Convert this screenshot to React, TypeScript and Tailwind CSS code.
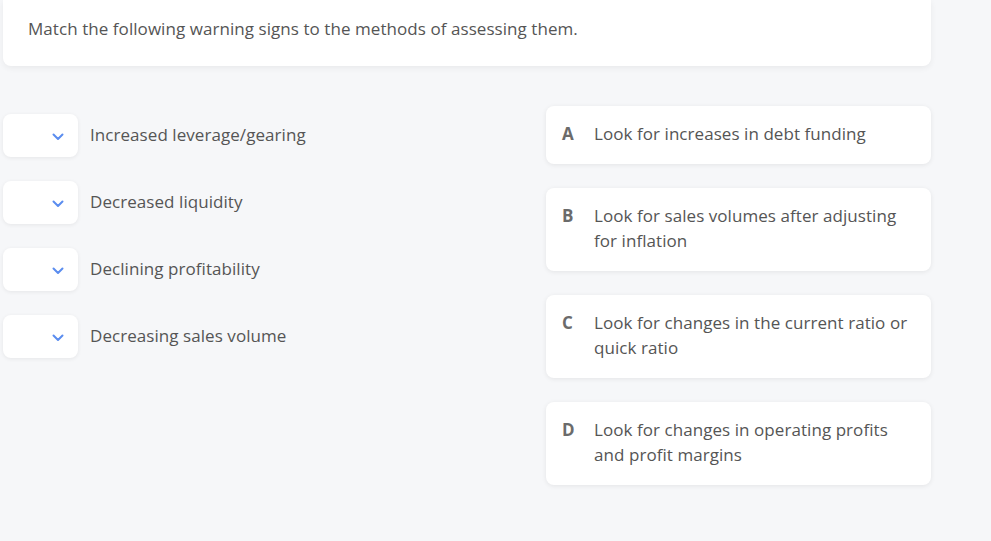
import React from "react";

const left = [
  "Increased leverage/gearing",
  "Decreased liquidity",
  "Declining profitability",
  "Decreasing sales volume",
];

const right: [string, string][] = [
  ["A", "Look for increases in debt funding"],
  ["B", "Look for sales volumes after adjusting for inflation"],
  ["C", "Look for changes in the current ratio or quick ratio"],
  ["D", "Look for changes in operating profits and profit margins"],
];

function Chevron() {
  return (
    <svg width="12" height="8" viewBox="0 0 12 8" fill="none">
      <path d="M1.5 1.5 L6 6 L10.5 1.5" stroke="#5b8def" strokeWidth="2" strokeLinecap="round" strokeLinejoin="round" />
    </svg>
  );
}

export default function App() {
  return (
    <div className="min-h-[541px] w-[991px] bg-[#f6f7f9] text-[17px] tracking-[0.06px] text-[#555555]" style={{ fontFamily: '"Open Sans", sans-serif' }}>
      <div className="ml-[3px] w-[928px] rounded-b-lg bg-white pl-[25px] pt-[16px] pb-[24px] shadow-[0_2px_6px_rgba(0,0,0,0.06)]">
        <p className="leading-[26px]">Match the following warning signs to the methods of assessing them.</p>
      </div>
      <div className="mt-[40px] flex">
        <div className="flex w-[546px] flex-col gap-[24px] pl-[3px] pt-[8px]">
          {left.map((t) => (
            <div key={t} className="flex h-[43px] items-center">
              <div className="flex h-[43px] w-[75px] items-center justify-end rounded-lg bg-white pr-[14px] pt-[2px] shadow-[0_1px_4px_rgba(0,0,0,0.07)]">
                <Chevron />
              </div>
              <span className="ml-[12px] -mt-[2px] leading-[24px]">{t}</span>
            </div>
          ))}
        </div>
        <div className="flex w-[385px] flex-col gap-[24px]">
          {right.map(([l, t]) => (
            <div key={l} className="flex rounded-lg bg-white px-[16px] pt-[15px] pb-[18px] shadow-[0_1px_5px_rgba(0,0,0,0.08)]">
              <span className="w-[32px] shrink-0 font-bold leading-[25px] text-[#6b6b6b]">{l}</span>
              <span className="pr-[6px] leading-[25px]">{t}</span>
            </div>
          ))}
        </div>
      </div>
    </div>
  );
}
